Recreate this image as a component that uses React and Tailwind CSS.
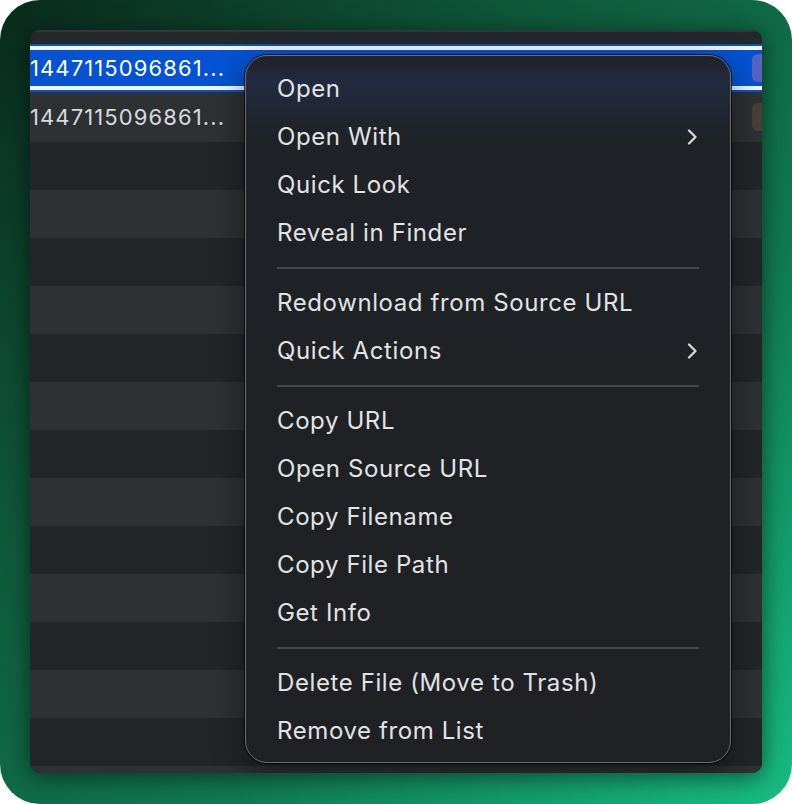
import React from 'react';

const font = { fontFamily: 'Inter, "Noto Sans", sans-serif' };

const menuGroups = [
    [
        { label: 'Open' },
        { label: 'Open With', sub: true },
        { label: 'Quick Look' },
        { label: 'Reveal in Finder' },
    ],
    [
        { label: 'Redownload from Source URL' },
        { label: 'Quick Actions', sub: true },
    ],
    [
        { label: 'Copy URL' },
        { label: 'Open Source URL' },
        { label: 'Copy Filename' },
        { label: 'Copy File Path' },
        { label: 'Get Info' },
    ],
    [
        { label: 'Delete File (Move to Trash)' },
        { label: 'Remove from List' },
    ],
];

const Chevron = () => (
    <svg width="14" height="18" viewBox="0 0 14 18" fill="none">
        <path d="M4 2.5 L10.5 9 L4 15.5" stroke="#d4d5d6" strokeWidth="2.4" strokeLinecap="round" strokeLinejoin="round" />
    </svg>
);

const App = () => {
    // 13 empty striped rows below the two file rows
    const emptyRows = Array.from({ length: 13 }, (_, i) => i);

    return (
        <div className="w-[792px] h-[804px] bg-white" style={font}>
            <div className="w-full h-full rounded-[40px] bg-[linear-gradient(135deg,#0a2a1c_0%,#0f5a3c_35%,#117a52_65%,#17bd84_100%)] p-[30px] pb-[31px]">
                <div className="relative h-full rounded-[10px] overflow-hidden bg-[#25282b] shadow-[0_4px_24px_rgba(0,0,0,0.55)] flex flex-col">
                    {/* header strip */}
                    <div className="h-[14px] shrink-0 border-t-2 border-[#34373a] bg-[#25282b]" />

                    {/* selected row */}
                    <div className="h-[48px] shrink-0 bg-[#0553d2] py-[2px] flex">
                        <div className="flex-1 flex flex-col">
                            <div className="h-[4px] bg-[#f4f6fa]" />
                            <div className="flex-1 flex items-center justify-between">
                                <span className="text-[22px] text-white tracking-[1.1px] whitespace-nowrap">1447115096861...</span>
                                <div className="w-[10px] h-[28px] rounded-l-[6px] bg-[#5764c4]" />
                            </div>
                            <div className="h-[4px] bg-[#f4f6fa]" />
                        </div>
                    </div>

                    {/* second row */}
                    <div className="h-[50px] shrink-0 bg-[#2e3134] flex items-center justify-between">
                        <span className="text-[22px] text-[#d9dadb] tracking-[1.1px] whitespace-nowrap">1447115096861...</span>
                        <div className="w-[10px] h-[28px] rounded-l-[6px] bg-[#4b4039]" />
                    </div>

                    {emptyRows.map((i) => (
                        <div key={i} className={`h-[48px] shrink-0 ${i % 2 === 0 ? 'bg-[#232629]' : 'bg-[#2e3134]'}`} />
                    ))}
                    <div className="flex-1 bg-[#2e3134]" />

                    {/* context menu */}
                    <div className="absolute left-[215px] top-[25px] w-[486px] h-[708px] rounded-[22px] border border-[#6a6d71] ring-1 ring-black/70 bg-[linear-gradient(180deg,#1f2228_0px,#222a40_26px,#212736_50px,#1f2226_85px,#1f2124_100%)] shadow-[0_10px_30px_rgba(0,0,0,0.5)] pt-[9px] px-[31px] flex flex-col">
                        {menuGroups.map((group, gi) => (
                            <div key={gi} className="flex flex-col">
                                {gi > 0 && (
                                    <div className="h-[22px] flex items-center">
                                        <div className="w-full h-[2px] bg-[#45484b]" />
                                    </div>
                                )}
                                {group.map((item) => (
                                    <div key={item.label} className="h-[48px] flex items-center justify-between">
                                        <span className="text-[24px] text-[#e2e3e4] tracking-[0.6px] whitespace-nowrap">{item.label}</span>
                                        {item.sub && <Chevron />}
                                    </div>
                                ))}
                            </div>
                        ))}
                    </div>
                </div>
            </div>
        </div>
    );
};

export default App;
